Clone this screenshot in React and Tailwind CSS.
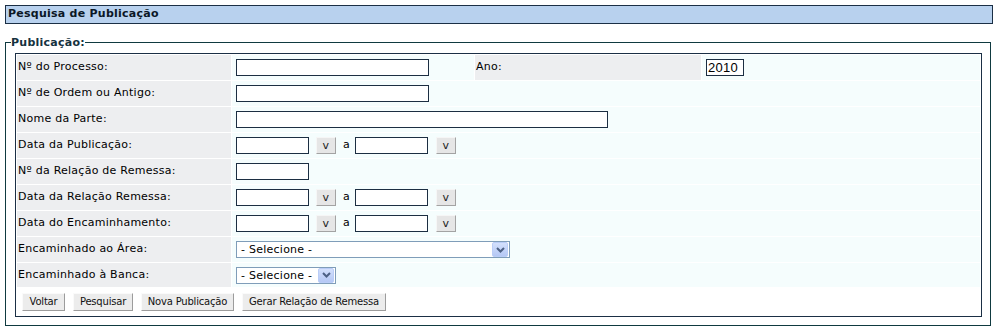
import React from "react";

function Chevron() {
  return (
    <svg width="9" height="6" viewBox="0 0 9 6" className="block">
      <path d="M1 1 L4.5 4.5 L8 1" fill="none" stroke="#4d6185" strokeWidth="2" />
    </svg>
  );
}

function FakeSelect({ w }) {
  return (
    <div className={`${w} h-[17px] border border-[#7f9db9] bg-white flex items-center justify-between pl-[4px] pr-px`}>
      <span className="leading-none">- Selecione -</span>
      <div className="w-[16px] h-[15px] rounded-[2px] border border-[#bacdf7] bg-gradient-to-b from-[#d3e0fc] to-[#b5c8f5] flex items-center justify-center">
        <Chevron />
      </div>
    </div>
  );
}

function Input({ w }) {
  return <div className={`${w} h-[17px] border border-[#1c2e42] bg-white shrink-0`} />;
}

function VBtn() {
  return (
    <div className="w-[20px] h-[17px] shrink-0 bg-[#e6e6e6] border border-t-[#f6f6f6] border-l-[#f6f6f6] border-r-[#a3a3a3] border-b-[#a3a3a3] flex items-center justify-center leading-none text-[#222]">
      v
    </div>
  );
}

function DateRange() {
  return (
    <div className="flex items-center">
      <Input w="w-[73px]" />
      <div className="ml-[7px]"><VBtn /></div>
      <span className="ml-[7px] mr-[5px]">a</span>
      <Input w="w-[73px]" />
      <div className="ml-[8px]"><VBtn /></div>
    </div>
  );
}

function Label({ children }) {
  return (
    <div className="w-[214px] shrink-0 bg-[#edeef0] pl-px flex items-center">{children}</div>
  );
}

function Row({ label, h = "h-[25px]", children }) {
  return (
    <div className={`flex gap-px ${h}`}>
      <Label>{label}</Label>
      <div className="flex-1 bg-[#f5fdfd] pl-[4px] flex items-center">{children}</div>
    </div>
  );
}

function Btn({ w, children }) {
  return (
    <div
      className={`${w} shrink-0 min-w-0 overflow-hidden whitespace-nowrap h-[18px] bg-[#ececec] border border-t-[#fafafa] border-l-[#fafafa] border-r-[#9c9c9c] border-b-[#9c9c9c] flex items-center justify-center leading-none text-[10px] tracking-[-0.2px] text-[#111]`}
    >
      {children}
    </div>
  );
}

export default function App() {
  return (
    <div className="w-[997px] h-[331px] bg-white pt-[5px] pl-[5px] font-['DejaVu_Sans',sans-serif] text-[11px] tracking-[0.25px] text-black">
      <div className="w-[988px] h-[19px] border border-[#1b2f45] bg-[#b8d1ee] pl-[2px] flex items-center font-bold text-[#0b1726]">
        Pesquisa de Publicação
      </div>
      <fieldset className="mt-[12px] w-[986px] border border-[#0f3a40]">
        <legend className="ml-[5px] font-bold leading-[13px] text-[#16323f]">Publicação:</legend>
        <div className="mt-[4px] ml-[9px] mb-[8px] w-[967px] border border-[#1b2f45] bg-white p-px flex flex-col gap-px">
          <div className="flex gap-px h-[25px]">
            <Label>Nº do Processo:</Label>
            <div className="w-[242px] bg-[#f5fdfd] pl-[4px] flex items-center">
              <Input w="w-[193px]" />
            </div>
            <div className="w-[226px] bg-[#edeef0] pl-px flex items-center">Ano:</div>
            <div className="flex-1 bg-[#f5fdfd] pl-[4px] flex items-center">
              <div className="w-[38px] h-[17px] border border-[#1c2e42] bg-white flex items-center pl-px font-['Liberation_Sans',sans-serif] text-[13px] tracking-[0.3px] leading-none">
                2010
              </div>
            </div>
          </div>
          <Row label="Nº de Ordem ou Antigo:"><Input w="w-[193px]" /></Row>
          <Row label="Nome da Parte:"><Input w="w-[372px]" /></Row>
          <Row label="Data da Publicação:"><DateRange /></Row>
          <Row label="Nº da Relação de Remessa:"><Input w="w-[73px]" /></Row>
          <Row label="Data da Relação Remessa:"><DateRange /></Row>
          <Row label="Data do Encaminhamento:"><DateRange /></Row>
          <Row label="Encaminhado ao Área:"><FakeSelect w="w-[274px]" /></Row>
          <Row label="Encaminhado à Banca:" h="h-[24px]"><FakeSelect w="w-[100px]" /></Row>
          <div className="h-[27px] bg-white pl-[5px] flex items-center gap-[8px]">
            <Btn w="w-[43px]">Voltar</Btn>
            <Btn w="w-[60px]">Pesquisar</Btn>
            <Btn w="w-[93px]">Nova Publicação</Btn>
            <Btn w="w-[144px]">Gerar Relação de Remessa</Btn>
          </div>
        </div>
      </fieldset>
    </div>
  );
}
